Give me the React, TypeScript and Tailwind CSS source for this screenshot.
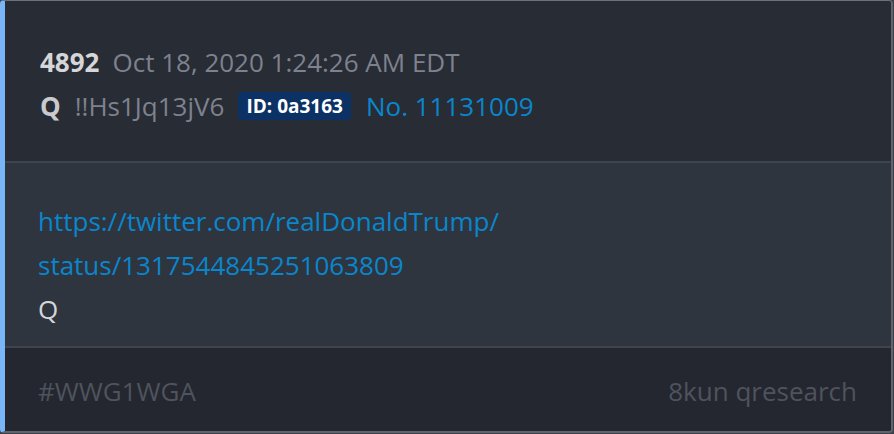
export default function App() {
  return (
    <div className="h-[434px] w-[894px] bg-[#3a3f48] font-['Open_Sans',sans-serif]">
      <div className="flex h-[433px] w-[893px] flex-col overflow-hidden rounded-[4px] border-t border-r-2 border-b-2 border-l-[5px] border-t-[#6c717b] border-r-[#5f646d] border-b-[#5f646d] border-l-[#78b6f7] bg-[#282c35]">
        <div className="flex h-[162px] shrink-0 flex-col border-b-2 border-[#40444d] pt-[39px] pl-[35px] text-[26px] leading-[44px]">
          <div className="flex items-center">
            <span className="font-bold text-[#d6d6d8]">4892</span>
            <span className="ml-[13px] text-[#7e828e]">Oct 18, 2020 1:24:26 AM EDT</span>
          </div>
          <div className="flex items-center">
            <span className="font-bold text-[#c9cacd]">Q</span>
            <span className="ml-[14px] text-[#7e828e]">!!Hs1Jq13jV6</span>
            <span className="ml-[14px] rounded-[4px] bg-[#0c3265] px-[8px] text-[19px] leading-[28px] font-bold text-white">
              ID: 0a3163
            </span>
            <span className="ml-[15px] text-[#0a86cc]">No. 11131009</span>
          </div>
        </div>
        <div className="flex flex-1 flex-col border-b-2 border-[#40444d] bg-[#2f353f] pt-[36px] pl-[33px] text-[26px] leading-[44px]">
          <a className="text-[#0a86cc]">https://twitter.com/realDonaldTrump/</a>
          <a className="text-[#0a86cc]">status/1317544845251063809</a>
          <span className="text-[#d4d6d9]">Q</span>
        </div>
        <div className="flex h-[83px] shrink-0 items-center justify-between bg-[#24272f] pt-[3px] pr-[34px] pl-[33px] text-[26px] text-[#4e535d]">
          <span>#WWG1WGA</span>
          <span>8kun qresearch</span>
        </div>
      </div>
    </div>
  );
}
